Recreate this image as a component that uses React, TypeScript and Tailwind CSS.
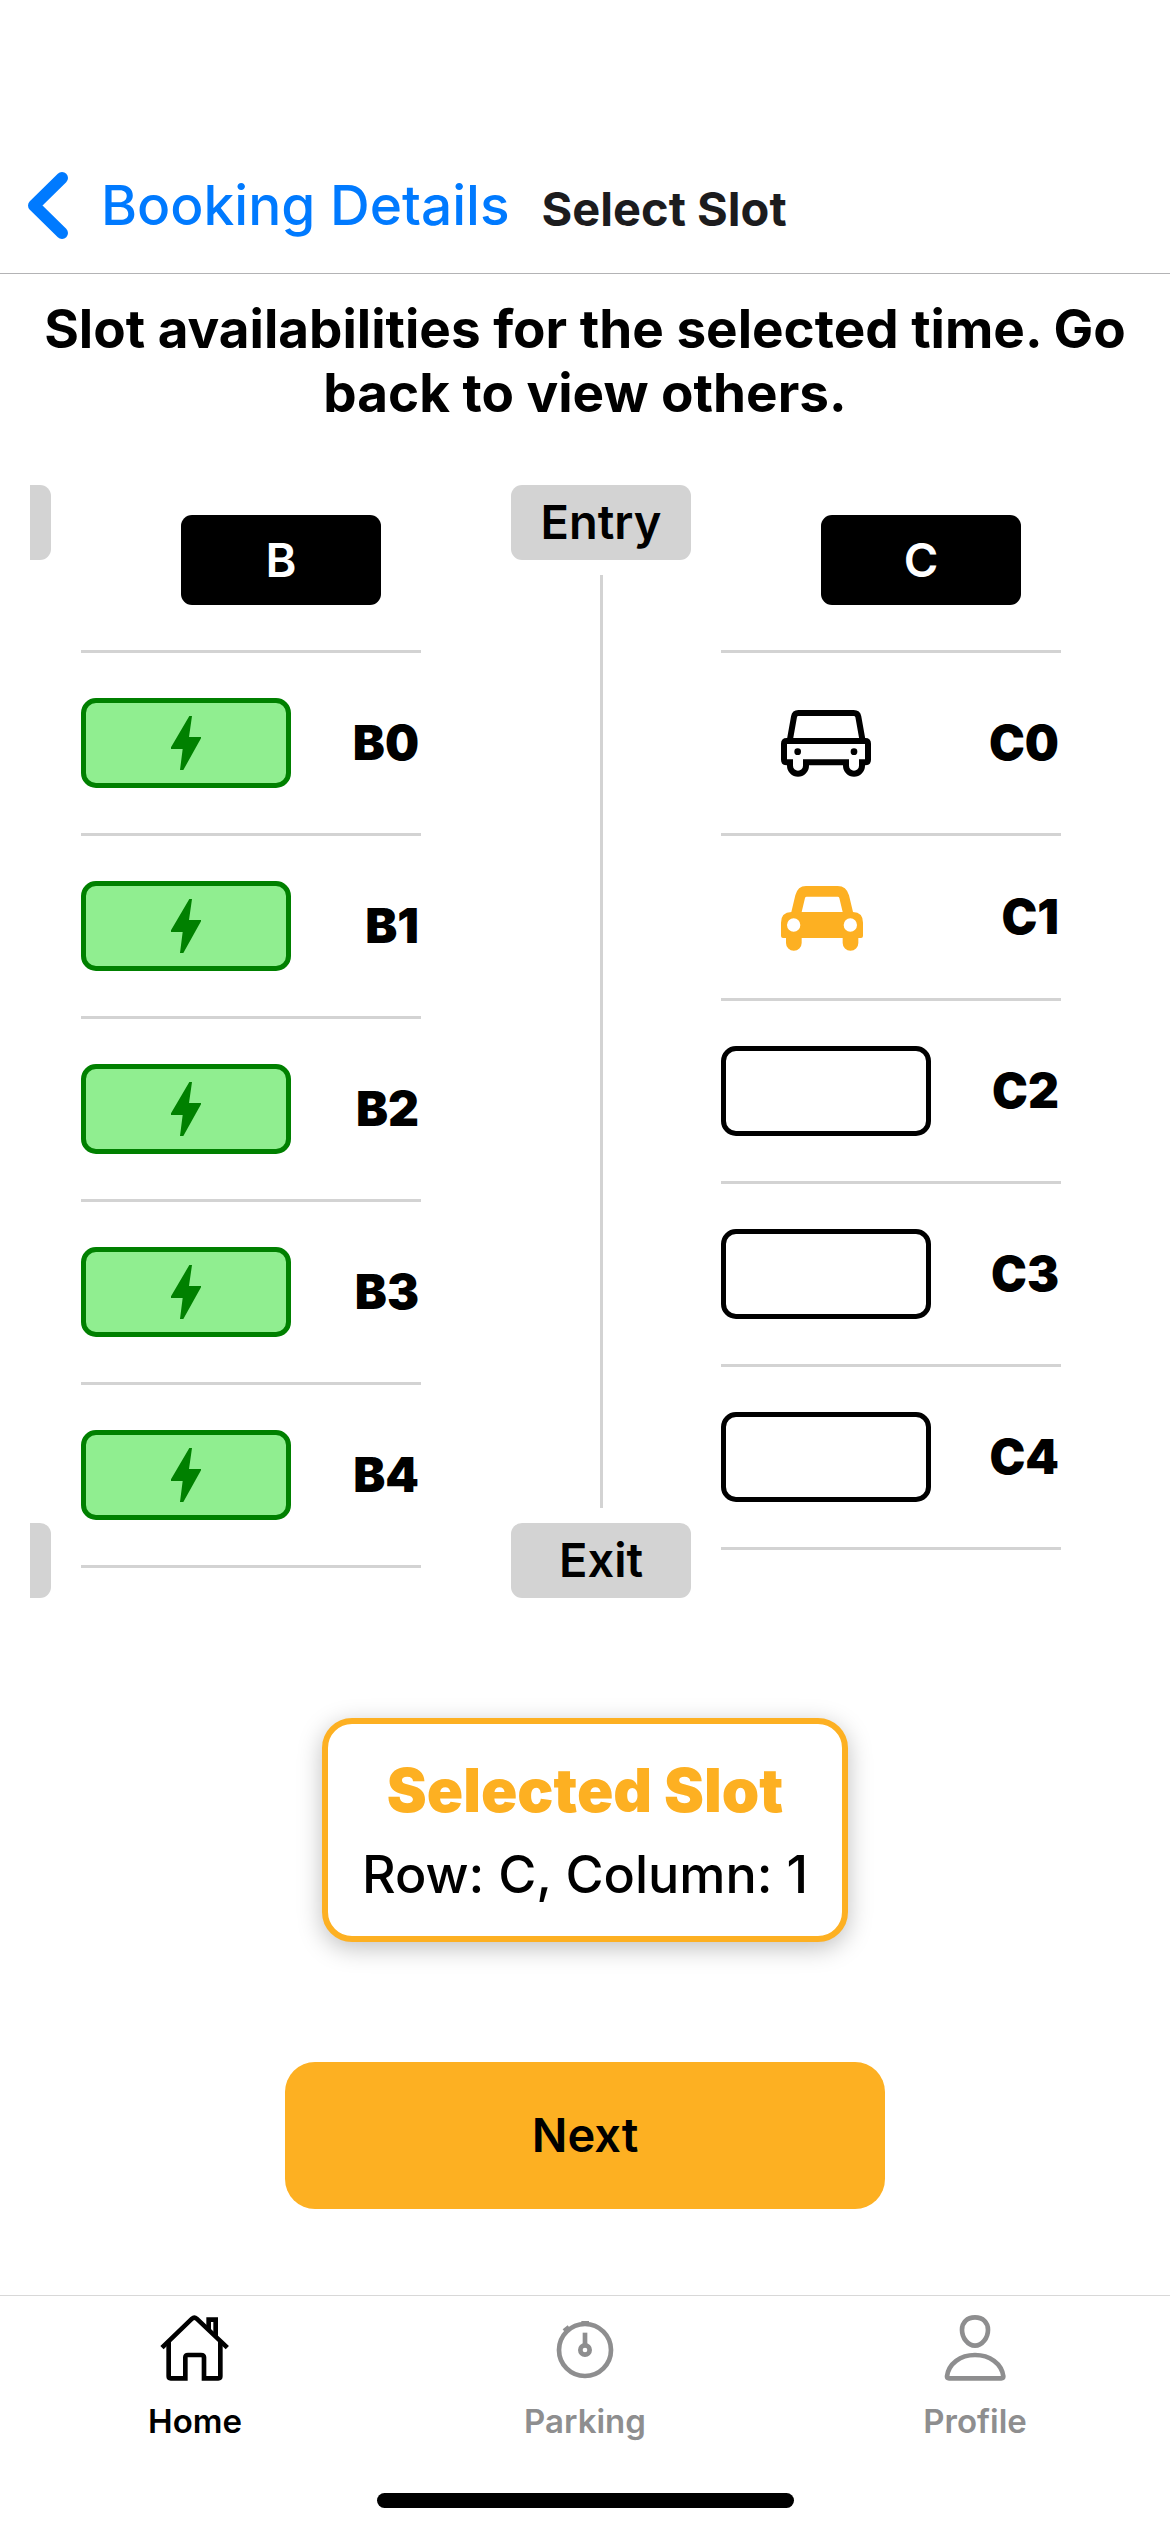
import { useState } from "react";
import type { ReactNode } from "react";

type SlotKind = "charger" | "occupied" | "free";
type Slot = { id: string; kind: SlotKind };

const ROW_B: Slot[] = [
  { id: "B0", kind: "charger" },
  { id: "B1", kind: "charger" },
  { id: "B2", kind: "charger" },
  { id: "B3", kind: "charger" },
  { id: "B4", kind: "charger" },
];

const ROW_C: Slot[] = [
  { id: "C0", kind: "occupied" },
  { id: "C1", kind: "free" },
  { id: "C2", kind: "free" },
  { id: "C3", kind: "free" },
  { id: "C4", kind: "free" },
];

function ChevronIcon() {
  return (
    <svg viewBox="0 0 40 67" className="h-[67px] w-10" fill="none" stroke="#007aff" strokeWidth="12" strokeLinecap="round" strokeLinejoin="round" aria-hidden="true">
      <path d="M34 6 L6 33.5 L34 61" />
    </svg>
  );
}

function BoltIcon() {
  return (
    <svg viewBox="0 0 90 162" className="h-[54px] w-[30px]" fill="#008000" aria-hidden="true">
      <path d="M55 0H63L54 63H90V67L37 162H27L35 99H0V94Z" />
    </svg>
  );
}

function CarOutlineIcon() {
  return (
    <svg viewBox="240 210 270 201" className="h-[67px] w-[90px]" fill="none" stroke="#000" strokeWidth="18" aria-hidden="true">
      <path d="M267 298 L279 230 Q281 219 292 219 H458 Q470 219 472 230 L484 298" />
      <path d="M267 367V377a24 24 0 0 0 48 0V367H435V377a24 24 0 0 0 48 0V367H493q8 0 8-8V311q0-8-8-8H257q-8 0-8 8v48q0 8 8 8Z" />
      <circle cx="290" cy="335" r="10" fill="#000" stroke="none" />
      <circle cx="459" cy="335" r="10" fill="#000" stroke="none" />
    </svg>
  );
}

function CarSolidIcon() {
  return (
    <svg viewBox="240 738 246 195" className="h-[65px] w-[82px]" fill="#fdb022" fillRule="evenodd" aria-hidden="true">
      <path d="M271 816L283 766Q290 738 315 738H410Q436 738 444 766L456 816Q486 817 486 848V888q0 6-6 6H472V909a23.5 23.5 0 0 1-47 0V894H302V909a23.5 23.5 0 0 1-47 0V894H246q-6 0-6-6V848Q240 817 271 816ZM302 816H425L415 774q-1-4-5-4H317q-4 0-5 4ZM258 855a20 20 0 1 0 40 0a20 20 0 1 0-40 0ZM428 855a20 20 0 1 0 40 0a20 20 0 1 0-40 0Z" />
    </svg>
  );
}

function HomeIcon() {
  return (
    <svg viewBox="180 102 210 204" className="h-[68px] w-[70px]" fill="none" stroke="currentColor" strokeWidth="14" aria-hidden="true">
      <path d="M186 203L276 116Q283 110 290 116L382 203" />
      <path d="M206 186V289q0 6 6 6H256V232q0-7 8-7H303q9 0 9 7V295H355q6 0 6-6V186" />
      <path d="M326 150V119H347V168" />
    </svg>
  );
}

function ParkingIcon() {
  return (
    <svg viewBox="148 102 210 204" className="h-[68px] w-[70px]" fill="none" stroke="currentColor" strokeWidth="14" aria-hidden="true">
      <circle cx="253" cy="210" r="78" />
      <circle cx="253" cy="210" r="14" />
      <path d="M253 158V198" />
      <path d="M242 130H265" />
      <path d="M191 154L206 142" strokeWidth="16" />
    </svg>
  );
}

function ProfileIcon() {
  return (
    <svg viewBox="178 102 210 204" className="h-[68px] w-[70px]" fill="none" stroke="currentColor" strokeWidth="14" aria-hidden="true">
      <path d="M283 112C307 112 322 128 322 149C322 174 304 197 283 197C262 197 244 174 244 149C244 128 259 112 283 112Z" />
      <path d="M199 289C204 251 239 225 283 225C327 225 363 251 368 289Q368 295 362 295H205Q199 295 199 289Z" />
    </svg>
  );
}

function SlotRow({ slot, selected, onSelect }: { slot: Slot; selected: boolean; onSelect: () => void }) {
  let mark: ReactNode;
  if (selected) {
    mark = (
      <span className="flex h-[72px] w-[202px] items-center justify-end pt-[3px] pr-[60px]">
        <CarSolidIcon />
      </span>
    );
  } else if (slot.kind === "occupied") {
    mark = (
      <span className="flex h-[90px] w-[210px] items-center justify-end pr-[60px]">
        <CarOutlineIcon />
      </span>
    );
  } else if (slot.kind === "charger") {
    mark = (
      <span className="flex h-[90px] w-[210px] items-center justify-center rounded-[15px] border-5 border-[#008000] bg-[#90ee90]">
        <BoltIcon />
      </span>
    );
  } else {
    mark = <span className="h-[90px] w-[210px] rounded-[15px] border-5 border-black" />;
  }
  return (
    <li className="w-[340px] border-b-3 border-[#d3d3d3]">
      <button type="button" onClick={onSelect} className="flex w-full items-center justify-between py-[45px]">
        {mark}
        <span className="pr-[2px] text-[48px] leading-[58px] font-black">{slot.id}</span>
      </button>
    </li>
  );
}

function SlotColumn({ name, slots, selected, onSelect }: { name: string; slots: Slot[]; selected: string; onSelect: (id: string) => void }) {
  return (
    <section className="w-[400px] shrink-0 pt-[30px]">
      <h2 className="mx-auto flex h-[90px] w-[200px] items-center justify-center rounded-[11px] bg-black text-[47px] font-semibold text-white">{name}</h2>
      <ul className="mt-[45px]">
        <li className="w-[340px] border-b-3 border-[#d3d3d3]" aria-hidden="true" />
        {slots.map((slot) => (
          <SlotRow key={slot.id} slot={slot} selected={slot.id === selected} onSelect={() => onSelect(slot.id)} />
        ))}
      </ul>
    </section>
  );
}

function Gate({ children }: { children: ReactNode }) {
  return <div className="flex h-[75px] w-[180px] items-center justify-center rounded-[11px] bg-[#d3d3d3] text-[47px] font-semibold">{children}</div>;
}

function Tab({ label, icon, active = false }: { label: string; icon: ReactNode; active?: boolean }) {
  return (
    <a href="#" className={active ? "flex flex-1 flex-col items-center pt-[18px] text-black" : "flex flex-1 flex-col items-center pt-[18px] text-[#8e8e8f]"}>
      {icon}
      <span className="mt-[19px] text-[33px] leading-[40px] font-semibold">{label}</span>
    </a>
  );
}

export default function App() {
  const [selected, setSelected] = useState("C1");
  return (
    <div className="flex min-h-screen flex-col bg-white font-[Inter,sans-serif] text-black">
      <header className="flex items-center border-b border-[#b3b3b5] pt-[137px] pl-7">
        <a href="#" className="flex h-[136px] items-center gap-[33px] text-[55px] font-medium text-[#007aff]">
          <ChevronIcon />
          Booking Details
        </a>
        <h1 className="ml-8 pt-[9px] text-[47px] font-bold text-[#1c1c1e]">Select Slot</h1>
      </header>

      <main className="flex flex-1 flex-col items-center">
        <p className="px-[30px] pt-[23px] text-center text-[53px] leading-[64px] font-bold">
          Slot availabilities for the selected time. Go back to view others.
        </p>

        <div className="mt-[60px] w-full px-[30px]">
          <div className="flex gap-[30px] overflow-hidden">
            <div className="flex w-[21px] shrink-0 flex-col justify-between" aria-hidden="true">
              <div className="h-[75px] rounded-r-[11px] bg-[#d3d3d3]" />
              <div className="h-[75px] rounded-r-[11px] bg-[#d3d3d3]" />
            </div>
            <SlotColumn name="B" slots={ROW_B} selected={selected} onSelect={setSelected} />
            <div className="flex shrink-0 flex-col items-center gap-[15px]">
              <Gate>Entry</Gate>
              <div className="w-[3px] flex-1 bg-[#d3d3d3]" />
              <Gate>Exit</Gate>
            </div>
            <div className="pb-[48px]">
              <SlotColumn name="C" slots={ROW_C} selected={selected} onSelect={setSelected} />
            </div>
          </div>
        </div>

        <div className="mt-[120px] rounded-[30px] border-6 border-[#fdb022] bg-white px-[34px] pt-[28px] pb-[29px] text-center shadow-[0_6px_24px_rgba(0,0,0,0.25)]">
          <p className="text-[60px] leading-[76px] font-black text-[#fdb022]">Selected Slot</p>
          <p className="mt-[15px] text-[52px] leading-[64px] font-medium">
            Row: {selected[0]}, Column: {selected[1]}
          </p>
        </div>

        <button type="button" className="mt-[120px] mb-[86px] h-[147px] w-[600px] rounded-[30px] bg-[#fdb022] text-[47px] font-semibold">
          Next
        </button>
      </main>

      <nav className="flex border-t border-[#d8d8d8]">
        <Tab label="Home" icon={<HomeIcon />} active />
        <Tab label="Parking" icon={<ParkingIcon />} />
        <Tab label="Profile" icon={<ProfileIcon />} />
      </nav>
      <div className="flex justify-center pt-[52px] pb-[24px]">
        <div className="h-[15px] w-[417px] rounded-full bg-black" />
      </div>
    </div>
  );
}
